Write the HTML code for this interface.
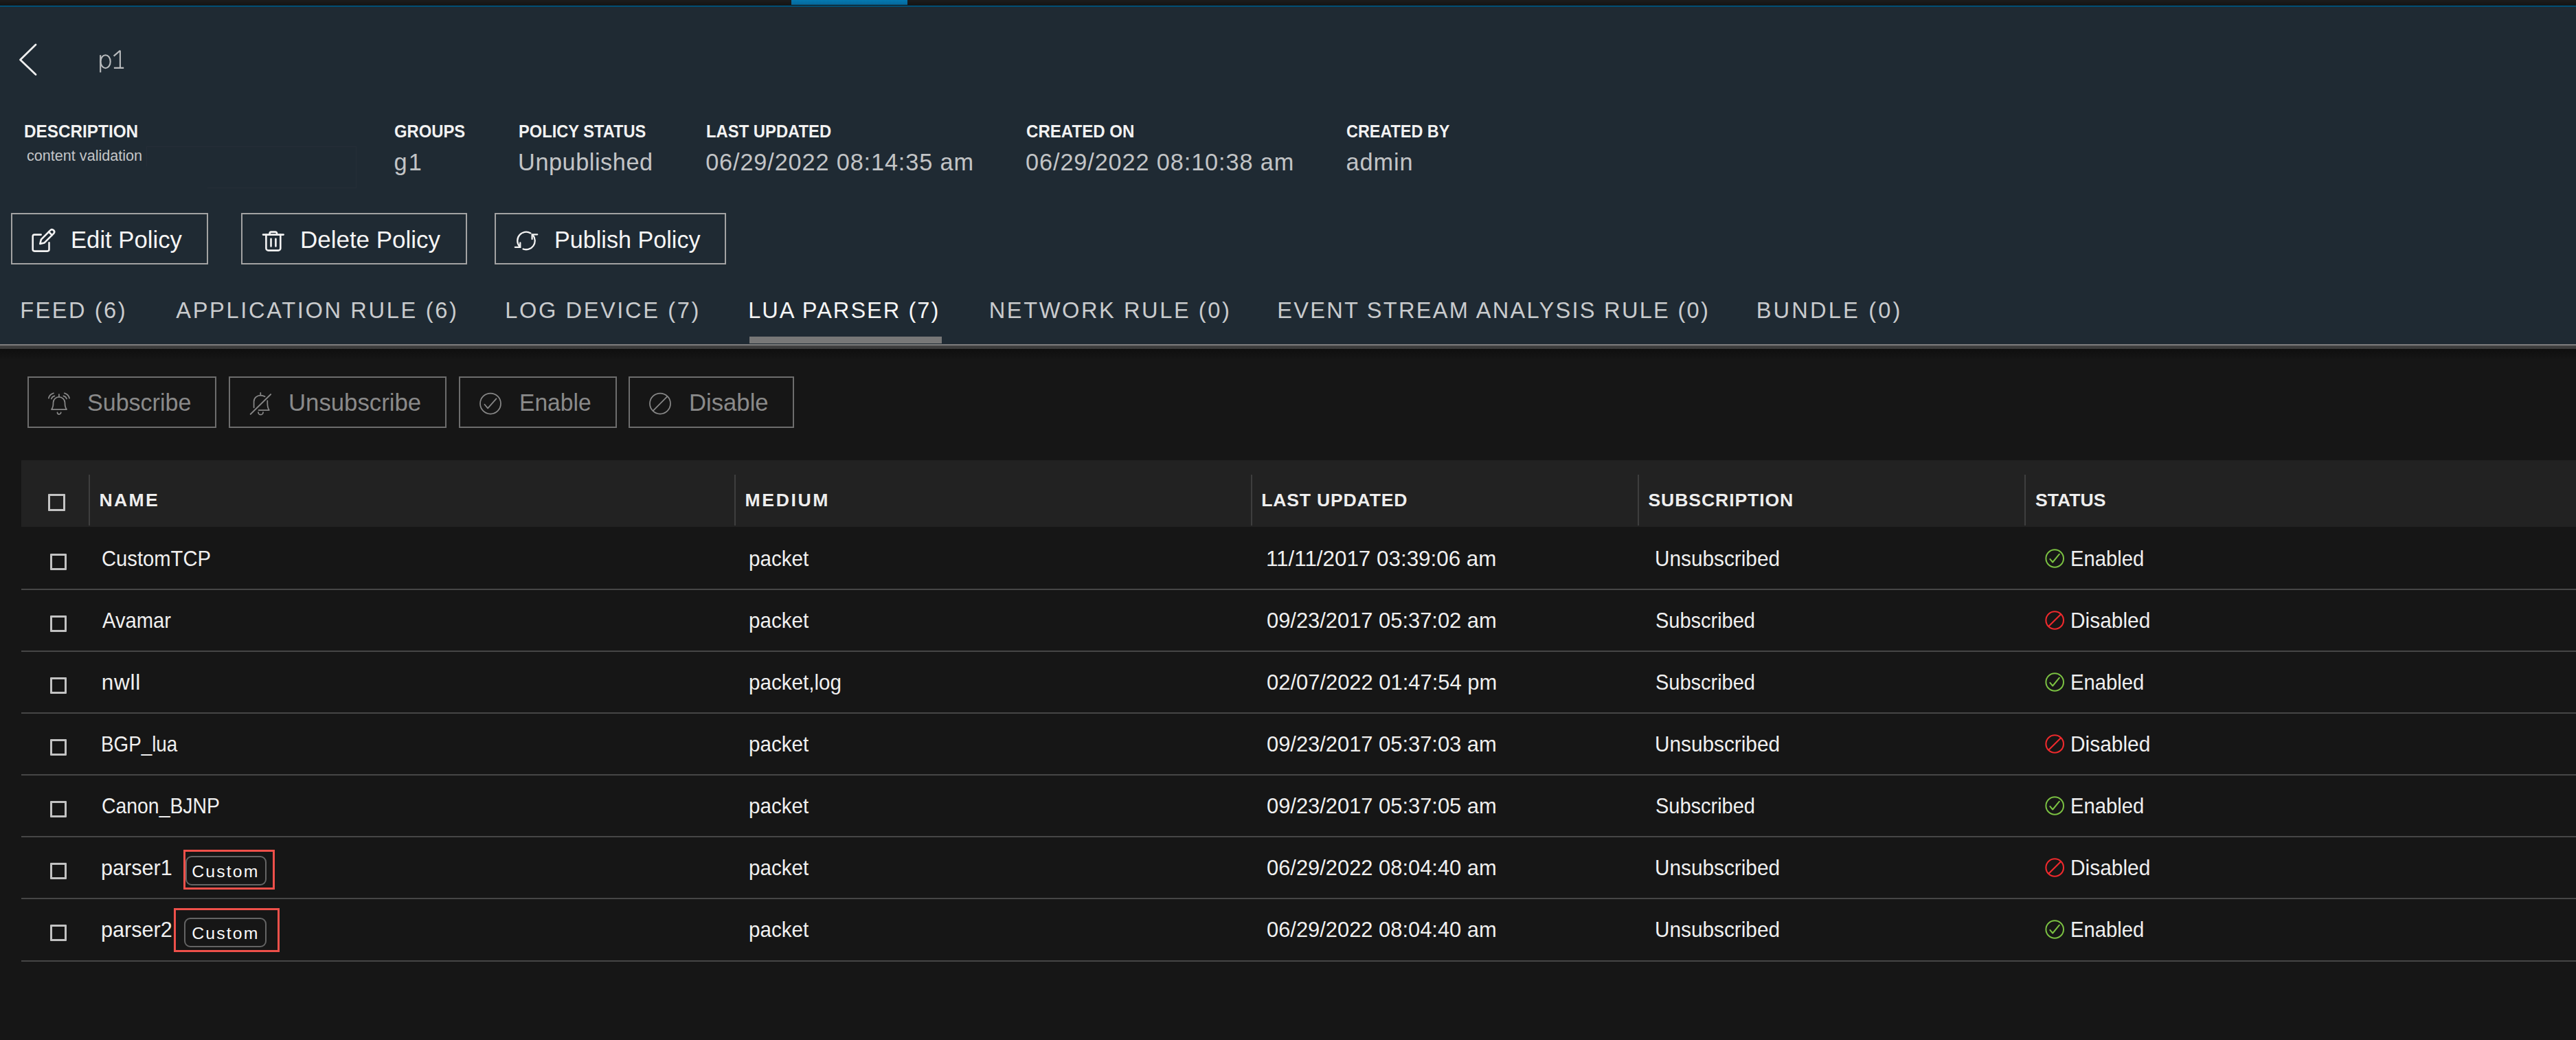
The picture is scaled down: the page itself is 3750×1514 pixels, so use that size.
<!DOCTYPE html>
<html><head><meta charset="utf-8"><title>p1</title>
<style>
html,body{margin:0;padding:0;}
body{width:3750px;height:1514px;overflow:hidden;background:#161616;position:relative;font-family:"Liberation Sans",sans-serif;}
.b{position:absolute;}
.t{position:absolute;line-height:0;white-space:nowrap;transform-origin:0 0;}
.ic{position:absolute;overflow:visible;}
</style></head><body>
<div class="b" style="left:0px;top:0px;width:3750px;height:8px;background:linear-gradient(#1c1c1c,#141414)"></div>
<div class="b" style="left:1152px;top:0px;width:169px;height:7px;background:linear-gradient(#0479b1,#06679a)"></div>
<div class="b" style="left:0px;top:8px;width:3750px;height:2px;background:#014f75"></div>
<div class="b" style="left:0px;top:10px;width:3750px;height:491px;background:#1f2a33"></div>
<div class="b" style="left:213px;top:213px;width:306px;height:1px;background:#252d37"></div>
<div class="b" style="left:518px;top:213px;width:1px;height:61px;background:#252d37"></div>
<div class="b" style="left:213px;top:213px;width:1px;height:29px;background:#252d37"></div>
<div class="b" style="left:302px;top:273px;width:217px;height:1px;background:#252d37"></div>
<div class="b" style="left:0px;top:501px;width:3750px;height:2px;background:#7d7d7d"></div>
<div class="b" style="left:0px;top:503px;width:3750px;height:5px;background:linear-gradient(#424242,#383838)"></div>
<div class="b" style="left:0px;top:508px;width:3750px;height:16px;background:linear-gradient(#0f0f0f,#161616)"></div>
<div class="b" style="left:1091px;top:490px;width:280px;height:10px;background:#777777"></div>
<div class="b" style="left:16px;top:310px;width:287px;height:75px;border:2.5px solid #a3a3a3;box-sizing:border-box"></div>
<div class="b" style="left:351px;top:310px;width:329px;height:75px;border:2.5px solid #a3a3a3;box-sizing:border-box"></div>
<div class="b" style="left:720px;top:310px;width:337px;height:75px;border:2.5px solid #a3a3a3;box-sizing:border-box"></div>
<div class="b" style="left:40px;top:548px;width:275px;height:75px;border:2px solid #6d6d6d;box-sizing:border-box"></div>
<div class="b" style="left:333px;top:548px;width:317px;height:75px;border:2px solid #6d6d6d;box-sizing:border-box"></div>
<div class="b" style="left:668px;top:548px;width:230px;height:75px;border:2px solid #6d6d6d;box-sizing:border-box"></div>
<div class="b" style="left:915px;top:548px;width:241px;height:75px;border:2px solid #6d6d6d;box-sizing:border-box"></div>
<div class="b" style="left:31px;top:670px;width:3719px;height:97px;background:#222222"></div>
<div class="b" style="left:129px;top:691px;width:2px;height:74px;background:#3e3e3e"></div>
<div class="b" style="left:1069px;top:691px;width:2px;height:74px;background:#3e3e3e"></div>
<div class="b" style="left:1821px;top:691px;width:2px;height:74px;background:#3e3e3e"></div>
<div class="b" style="left:2384px;top:691px;width:2px;height:74px;background:#3e3e3e"></div>
<div class="b" style="left:2947px;top:691px;width:2px;height:74px;background:#3e3e3e"></div>
<div class="b" style="left:70px;top:719px;width:25px;height:25px;border:3px solid #c4c4c4;border-radius:1px;box-sizing:border-box"></div>
<div class="b" style="left:31px;top:857px;width:3719px;height:2px;background:#464646"></div>
<div class="b" style="left:73px;top:806px;width:24px;height:24px;border:3px solid #c2c2c2;border-radius:1px;box-sizing:border-box"></div>
<div class="b" style="left:31px;top:947px;width:3719px;height:2px;background:#464646"></div>
<div class="b" style="left:73px;top:896px;width:24px;height:24px;border:3px solid #c2c2c2;border-radius:1px;box-sizing:border-box"></div>
<div class="b" style="left:31px;top:1037px;width:3719px;height:2px;background:#464646"></div>
<div class="b" style="left:73px;top:986px;width:24px;height:24px;border:3px solid #c2c2c2;border-radius:1px;box-sizing:border-box"></div>
<div class="b" style="left:31px;top:1127px;width:3719px;height:2px;background:#464646"></div>
<div class="b" style="left:73px;top:1076px;width:24px;height:24px;border:3px solid #c2c2c2;border-radius:1px;box-sizing:border-box"></div>
<div class="b" style="left:31px;top:1217px;width:3719px;height:2px;background:#464646"></div>
<div class="b" style="left:73px;top:1166px;width:24px;height:24px;border:3px solid #c2c2c2;border-radius:1px;box-sizing:border-box"></div>
<div class="b" style="left:31px;top:1307px;width:3719px;height:2px;background:#464646"></div>
<div class="b" style="left:73px;top:1256px;width:24px;height:24px;border:3px solid #c2c2c2;border-radius:1px;box-sizing:border-box"></div>
<div class="b" style="left:31px;top:1398px;width:3719px;height:2px;background:#464646"></div>
<div class="b" style="left:73px;top:1346px;width:24px;height:24px;border:3px solid #c2c2c2;border-radius:1px;box-sizing:border-box"></div>
<div class="b" style="left:267px;top:1237px;width:133px;height:58px;border:3px solid #ee504a;box-sizing:border-box"></div>
<div class="b" style="left:270px;top:1246px;width:118px;height:43px;border:2px solid #646464;border-radius:9px;box-sizing:border-box"></div>
<div class="b" style="left:253px;top:1322px;width:154px;height:64px;border:3px solid #ee504a;box-sizing:border-box"></div>
<div class="b" style="left:268px;top:1336px;width:120px;height:43px;border:2px solid #646464;border-radius:9px;box-sizing:border-box"></div>
<svg class="ic" style="left:140px;top:68px" width="45" height="42" viewBox="0 0 45 42" ><g fill="none" stroke="#b9bbbd" stroke-width="2.1" stroke-linecap="butt"><path d="M6.2 12.2 V37.4"/><ellipse cx="13.6" cy="21.7" rx="7.1" ry="9.5"/><path d="M34.9 5.6 V31.3 M34.9 5.6 L25.6 13.6 M25.9 30.9 H40.2"/></g></svg>
<svg class="ic" style="left:20px;top:55px" width="45" height="65" viewBox="0 0 45 65" ><path d="M32 10 L9.5 32 L32 53.5" fill="none" stroke="#eeeeee" stroke-width="2.8" stroke-linecap="round" stroke-linejoin="round"/></svg>
<svg class="ic" style="left:40px;top:325px" width="50" height="50" viewBox="0 0 50 50" ><g fill="none" stroke="#f2f2f2" stroke-width="2.6" stroke-linecap="round" stroke-linejoin="round"><path d="M19.7 16.6 H10.2 A2.5 2.5 0 0 0 7.7 19.1 V38.1 A2.5 2.5 0 0 0 10.2 40.6 H29 A2.5 2.5 0 0 0 31.5 38.1 V28.3"/><path d="M18.3 30 L19.9 23.6 L33.4 10.1 A3.4 3.4 0 0 1 38.2 14.9 L24.7 28.4 Z"/><path d="M31 12.5 L35.8 17.3"/></g></svg>
<svg class="ic" style="left:375px;top:325px" width="50" height="50" viewBox="0 0 50 50" ><g fill="none" stroke="#f2f2f2" stroke-width="2.6" stroke-linecap="round" stroke-linejoin="round"><path d="M8 16.6 H37.6"/><path d="M17.6 16.6 V14.8 A2.2 2.2 0 0 1 19.8 12.6 H25.9 A2.2 2.2 0 0 1 28.1 14.8 V16.6"/><path d="M12.4 16.6 V36.4 A3.2 3.2 0 0 0 15.6 39.6 H30.1 A3.2 3.2 0 0 0 33.3 36.4 V16.6"/><path d="M19.5 22.8 V33.5 M26.4 22.8 V33.5"/></g></svg>
<svg class="ic" style="left:740px;top:325px" width="50" height="50" viewBox="0 0 50 50" ><g fill="none" stroke="#f2f2f2" stroke-width="2.3" stroke-linecap="round" stroke-linejoin="miter"><path d="M32.4 14.4 A12.8 12.8 0 0 0 16.2 33.7"/><path d="M9.8 34.8 H17.3 V28.4"/><path d="M21.6 37.5 A12.8 12.8 0 0 0 35.8 17.3"/><path d="M42.2 16.3 H34.6 V23"/></g></svg>
<svg class="ic" style="left:63px;top:563px" width="45" height="45" viewBox="0 0 45 45" ><g fill="none" stroke="#878787" stroke-width="1.75" stroke-linecap="round" stroke-linejoin="round"><path d="M22.9 11 V14.6"/><path d="M12 33 C13.6 31 14.5 28 14.5 24 V23.3 C14.5 18.6 18.2 14.9 22.9 14.9 C27.6 14.9 31.5 18.6 31.5 23.3 V24 C31.5 28 32.4 31 34 33 Z"/><path d="M20.5 37.4 A2.6 2.6 0 0 0 25.7 37.4"/><path d="M15 9.3 A10 10 0 0 0 7.8 16.7"/><path d="M16.4 13.4 A6.5 6.5 0 0 0 11.8 17.5"/><path d="M30.8 9.3 A10 10 0 0 1 38 16.7"/><path d="M29.4 13.4 A6.5 6.5 0 0 1 34 17.5"/></g></svg>
<svg class="ic" style="left:357px;top:563px" width="45" height="45" viewBox="0 0 45 45" ><g fill="none" stroke="#878787" stroke-width="1.75" stroke-linecap="round" stroke-linejoin="round"><path d="M22.3 8.9 V12.4"/><path d="M12.6 30.3 V21.5 C12.6 16.5 17 12.6 22.3 12.6 C25 12.6 27 13.3 28.6 14.3"/><path d="M32.3 20.3 V24 C32.3 28.5 33 31.5 34.8 34 H19.5"/><path d="M19 37.2 A3.5 3.5 0 0 0 26 37.2"/><path d="M7.6 40 L37.2 11"/></g></svg>
<svg class="ic" style="left:690px;top:565px" width="50" height="45" viewBox="0 0 50 45" ><g fill="none" stroke="#878787" stroke-width="1.75" stroke-linecap="round" stroke-linejoin="round"><circle cx="24" cy="22.6" r="15"/><path d="M15.4 23.8 L20.1 29.4 L32.5 15.4"/></g></svg>
<svg class="ic" style="left:937px;top:565px" width="50" height="45" viewBox="0 0 50 45" ><g fill="none" stroke="#878787" stroke-width="1.75" stroke-linecap="round"><circle cx="24" cy="22.6" r="15"/><path d="M13.8 32.8 L34.2 12.4"/></g></svg>
<svg class="ic" style="left:2970px;top:790px" width="45" height="45" viewBox="0 0 45 45" ><g fill="none" stroke="#7bc142" stroke-width="2.0" stroke-linecap="round" stroke-linejoin="round"><circle cx="21.2" cy="23.00" r="12.8"/><path d="M14.3 23.90 L18.2 28.50 L27.9 16.70"/></g></svg>
<svg class="ic" style="left:2970px;top:880px" width="45" height="45" viewBox="0 0 45 45" ><g fill="none" stroke="#ee2a2d" stroke-width="2.1" stroke-linecap="round"><circle cx="21.2" cy="23.00" r="12.8"/><path d="M12.6 31.60 L29.8 14.40"/></g></svg>
<svg class="ic" style="left:2970px;top:970px" width="45" height="45" viewBox="0 0 45 45" ><g fill="none" stroke="#7bc142" stroke-width="2.0" stroke-linecap="round" stroke-linejoin="round"><circle cx="21.2" cy="23.00" r="12.8"/><path d="M14.3 23.90 L18.2 28.50 L27.9 16.70"/></g></svg>
<svg class="ic" style="left:2970px;top:1060px" width="45" height="45" viewBox="0 0 45 45" ><g fill="none" stroke="#ee2a2d" stroke-width="2.1" stroke-linecap="round"><circle cx="21.2" cy="23.00" r="12.8"/><path d="M12.6 31.60 L29.8 14.40"/></g></svg>
<svg class="ic" style="left:2970px;top:1150px" width="45" height="45" viewBox="0 0 45 45" ><g fill="none" stroke="#7bc142" stroke-width="2.0" stroke-linecap="round" stroke-linejoin="round"><circle cx="21.2" cy="23.00" r="12.8"/><path d="M14.3 23.90 L18.2 28.50 L27.9 16.70"/></g></svg>
<svg class="ic" style="left:2970px;top:1240px" width="45" height="45" viewBox="0 0 45 45" ><g fill="none" stroke="#ee2a2d" stroke-width="2.1" stroke-linecap="round"><circle cx="21.2" cy="23.00" r="12.8"/><path d="M12.6 31.60 L29.8 14.40"/></g></svg>
<svg class="ic" style="left:2970px;top:1330px" width="45" height="45" viewBox="0 0 45 45" ><g fill="none" stroke="#7bc142" stroke-width="2.0" stroke-linecap="round" stroke-linejoin="round"><circle cx="21.2" cy="23.00" r="12.8"/><path d="M14.3 23.90 L18.2 28.50 L27.9 16.70"/></g></svg>
<div class="t" style="left:35.30px;top:190.89px;font-size:26px;font-weight:700;color:#f2f2f2;letter-spacing:0.000px;transform:scaleX(0.9347);">DESCRIPTION</div>
<div class="t" style="left:574.42px;top:190.89px;font-size:26px;font-weight:700;color:#f2f2f2;letter-spacing:0.000px;transform:scaleX(0.9163);">GROUPS</div>
<div class="t" style="left:755.30px;top:190.89px;font-size:26px;font-weight:700;color:#f2f2f2;letter-spacing:0.000px;transform:scaleX(0.9101);">POLICY STATUS</div>
<div class="t" style="left:1027.86px;top:190.89px;font-size:26px;font-weight:700;color:#f2f2f2;letter-spacing:0.000px;transform:scaleX(0.9161);">LAST UPDATED</div>
<div class="t" style="left:1493.80px;top:190.89px;font-size:26px;font-weight:700;color:#f2f2f2;letter-spacing:0.000px;transform:scaleX(0.9261);">CREATED ON</div>
<div class="t" style="left:1960.30px;top:190.89px;font-size:26px;font-weight:700;color:#f2f2f2;letter-spacing:0.000px;transform:scaleX(0.9000);">CREATED BY</div>
<div class="t" style="left:39.30px;top:227.37px;font-size:22px;font-weight:400;color:#c4c6c8;letter-spacing:0.000px;transform:scaleX(0.9818);">content validation</div>
<div class="t" style="left:573.60px;top:235.71px;font-size:34.3px;font-weight:400;color:#c2c4c6;letter-spacing:2.201px;">g1</div>
<div class="t" style="left:754.08px;top:235.71px;font-size:34.3px;font-weight:400;color:#c2c4c6;letter-spacing:0.531px;">Unpublished</div>
<div class="t" style="left:1027.16px;top:235.71px;font-size:34.3px;font-weight:400;color:#c2c4c6;letter-spacing:0.856px;">06/29/2022 08:14:35 am</div>
<div class="t" style="left:1493.10px;top:235.71px;font-size:34.3px;font-weight:400;color:#c2c4c6;letter-spacing:0.871px;">06/29/2022 08:10:38 am</div>
<div class="t" style="left:1959.60px;top:235.71px;font-size:34.3px;font-weight:400;color:#c2c4c6;letter-spacing:0.920px;">admin</div>
<div class="t" style="left:102.88px;top:349.00px;font-size:35.2px;font-weight:400;color:#f5f5f5;letter-spacing:0.000px;transform:scaleX(0.9852);">Edit Policy</div>
<div class="t" style="left:437.38px;top:349.00px;font-size:35.2px;font-weight:400;color:#f5f5f5;letter-spacing:0.000px;transform:scaleX(0.9935);">Delete Policy</div>
<div class="t" style="left:807.20px;top:349.00px;font-size:35.2px;font-weight:400;color:#f5f5f5;letter-spacing:0.000px;transform:scaleX(0.9703);">Publish Policy</div>
<div class="t" style="left:29.20px;top:452.20px;font-size:32.6px;font-weight:400;color:#c9cbcd;letter-spacing:2.514px;">FEED (6)</div>
<div class="t" style="left:256.24px;top:452.20px;font-size:32.6px;font-weight:400;color:#c9cbcd;letter-spacing:2.671px;">APPLICATION RULE (6)</div>
<div class="t" style="left:735.20px;top:452.20px;font-size:32.6px;font-weight:400;color:#c9cbcd;letter-spacing:2.618px;">LOG DEVICE (7)</div>
<div class="t" style="left:1089.20px;top:452.20px;font-size:32.6px;font-weight:400;color:#f5f5f5;letter-spacing:2.001px;">LUA PARSER (7)</div>
<div class="t" style="left:1439.76px;top:452.20px;font-size:32.6px;font-weight:400;color:#c9cbcd;letter-spacing:2.584px;">NETWORK RULE (0)</div>
<div class="t" style="left:1859.20px;top:452.20px;font-size:32.6px;font-weight:400;color:#c9cbcd;letter-spacing:2.266px;">EVENT STREAM ANALYSIS RULE (0)</div>
<div class="t" style="left:2556.70px;top:452.20px;font-size:32.6px;font-weight:400;color:#c9cbcd;letter-spacing:3.192px;">BUNDLE (0)</div>
<div class="t" style="left:126.90px;top:586.46px;font-size:35.6px;font-weight:400;color:#8a8a8a;letter-spacing:0.000px;transform:scaleX(0.9569);">Subscribe</div>
<div class="t" style="left:420.20px;top:586.46px;font-size:35.6px;font-weight:400;color:#8a8a8a;letter-spacing:0.000px;transform:scaleX(0.9765);">Unsubscribe</div>
<div class="t" style="left:755.70px;top:586.46px;font-size:35.6px;font-weight:400;color:#8a8a8a;letter-spacing:0.000px;transform:scaleX(0.9441);">Enable</div>
<div class="t" style="left:1002.70px;top:586.46px;font-size:35.6px;font-weight:400;color:#8a8a8a;letter-spacing:0.000px;transform:scaleX(0.9745);">Disable</div>
<div class="t" style="left:144.60px;top:727.88px;font-size:26.6px;font-weight:700;color:#eeeeee;letter-spacing:2.254px;">NAME</div>
<div class="t" style="left:1084.60px;top:727.88px;font-size:26.6px;font-weight:700;color:#eeeeee;letter-spacing:2.587px;">MEDIUM</div>
<div class="t" style="left:1836.16px;top:727.88px;font-size:26.6px;font-weight:700;color:#eeeeee;letter-spacing:0.812px;">LAST UPDATED</div>
<div class="t" style="left:2399.48px;top:727.88px;font-size:26.6px;font-weight:700;color:#eeeeee;letter-spacing:0.899px;">SUBSCRIPTION</div>
<div class="t" style="left:2963.30px;top:727.88px;font-size:26.6px;font-weight:700;color:#eeeeee;letter-spacing:0.000px;transform:scaleX(0.9993);">STATUS</div>
<div class="t" style="left:148.36px;top:813.24px;font-size:31.6px;font-weight:400;color:#f0f0f0;letter-spacing:0.000px;transform:scaleX(0.9243);">CustomTCP</div>
<div class="t" style="left:1089.84px;top:813.24px;font-size:31.6px;font-weight:400;color:#f0f0f0;letter-spacing:0.000px;transform:scaleX(0.9358);">packet</div>
<div class="t" style="left:1843.34px;top:813.24px;font-size:31.6px;font-weight:400;color:#f0f0f0;letter-spacing:0.000px;transform:scaleX(0.9927);">11/11/2017 03:39:06 am</div>
<div class="t" style="left:2408.84px;top:813.24px;font-size:31.6px;font-weight:400;color:#f0f0f0;letter-spacing:0.000px;transform:scaleX(0.9422);">Unsubscribed</div>
<div class="t" style="left:3013.78px;top:813.24px;font-size:31.6px;font-weight:400;color:#f0f0f0;letter-spacing:0.000px;transform:scaleX(0.9254);">Enabled</div>
<div class="t" style="left:149.06px;top:903.24px;font-size:31.6px;font-weight:400;color:#f0f0f0;letter-spacing:0.000px;transform:scaleX(0.9233);">Avamar</div>
<div class="t" style="left:1089.84px;top:903.24px;font-size:31.6px;font-weight:400;color:#f0f0f0;letter-spacing:0.000px;transform:scaleX(0.9358);">packet</div>
<div class="t" style="left:1844.04px;top:903.24px;font-size:31.6px;font-weight:400;color:#f0f0f0;letter-spacing:0.000px;transform:scaleX(0.9772);">09/23/2017 05:37:02 am</div>
<div class="t" style="left:2409.54px;top:903.24px;font-size:31.6px;font-weight:400;color:#f0f0f0;letter-spacing:0.000px;transform:scaleX(0.9168);">Subscribed</div>
<div class="t" style="left:3013.78px;top:903.24px;font-size:31.6px;font-weight:400;color:#f0f0f0;letter-spacing:0.000px;transform:scaleX(0.9457);">Disabled</div>
<div class="t" style="left:147.66px;top:993.24px;font-size:31.6px;font-weight:400;color:#f0f0f0;letter-spacing:0.690px;">nwll</div>
<div class="t" style="left:1089.84px;top:993.24px;font-size:31.6px;font-weight:400;color:#f0f0f0;letter-spacing:0.000px;transform:scaleX(0.9369);">packet,log</div>
<div class="t" style="left:1844.04px;top:993.24px;font-size:31.6px;font-weight:400;color:#f0f0f0;letter-spacing:0.000px;transform:scaleX(0.9788);">02/07/2022 01:47:54 pm</div>
<div class="t" style="left:2409.54px;top:993.24px;font-size:31.6px;font-weight:400;color:#f0f0f0;letter-spacing:0.000px;transform:scaleX(0.9168);">Subscribed</div>
<div class="t" style="left:3013.78px;top:993.24px;font-size:31.6px;font-weight:400;color:#f0f0f0;letter-spacing:0.000px;transform:scaleX(0.9254);">Enabled</div>
<div class="t" style="left:146.96px;top:1083.24px;font-size:31.6px;font-weight:400;color:#f0f0f0;letter-spacing:0.000px;transform:scaleX(0.8798);">BGP_lua</div>
<div class="t" style="left:1089.84px;top:1083.24px;font-size:31.6px;font-weight:400;color:#f0f0f0;letter-spacing:0.000px;transform:scaleX(0.9358);">packet</div>
<div class="t" style="left:1844.04px;top:1083.24px;font-size:31.6px;font-weight:400;color:#f0f0f0;letter-spacing:0.000px;transform:scaleX(0.9772);">09/23/2017 05:37:03 am</div>
<div class="t" style="left:2408.84px;top:1083.24px;font-size:31.6px;font-weight:400;color:#f0f0f0;letter-spacing:0.000px;transform:scaleX(0.9422);">Unsubscribed</div>
<div class="t" style="left:3013.78px;top:1083.24px;font-size:31.6px;font-weight:400;color:#f0f0f0;letter-spacing:0.000px;transform:scaleX(0.9457);">Disabled</div>
<div class="t" style="left:148.36px;top:1173.24px;font-size:31.6px;font-weight:400;color:#f0f0f0;letter-spacing:0.000px;transform:scaleX(0.8984);">Canon_BJNP</div>
<div class="t" style="left:1089.84px;top:1173.24px;font-size:31.6px;font-weight:400;color:#f0f0f0;letter-spacing:0.000px;transform:scaleX(0.9358);">packet</div>
<div class="t" style="left:1844.04px;top:1173.24px;font-size:31.6px;font-weight:400;color:#f0f0f0;letter-spacing:0.000px;transform:scaleX(0.9772);">09/23/2017 05:37:05 am</div>
<div class="t" style="left:2409.54px;top:1173.24px;font-size:31.6px;font-weight:400;color:#f0f0f0;letter-spacing:0.000px;transform:scaleX(0.9168);">Subscribed</div>
<div class="t" style="left:3013.78px;top:1173.24px;font-size:31.6px;font-weight:400;color:#f0f0f0;letter-spacing:0.000px;transform:scaleX(0.9254);">Enabled</div>
<div class="t" style="left:146.96px;top:1263.24px;font-size:31.6px;font-weight:400;color:#f0f0f0;letter-spacing:0.000px;transform:scaleX(0.9684);">parser1</div>
<div class="t" style="left:1089.84px;top:1263.24px;font-size:31.6px;font-weight:400;color:#f0f0f0;letter-spacing:0.000px;transform:scaleX(0.9358);">packet</div>
<div class="t" style="left:1844.04px;top:1263.24px;font-size:31.6px;font-weight:400;color:#f0f0f0;letter-spacing:0.000px;transform:scaleX(0.9772);">06/29/2022 08:04:40 am</div>
<div class="t" style="left:2408.84px;top:1263.24px;font-size:31.6px;font-weight:400;color:#f0f0f0;letter-spacing:0.000px;transform:scaleX(0.9422);">Unsubscribed</div>
<div class="t" style="left:3013.78px;top:1263.24px;font-size:31.6px;font-weight:400;color:#f0f0f0;letter-spacing:0.000px;transform:scaleX(0.9457);">Disabled</div>
<div class="t" style="left:146.96px;top:1353.24px;font-size:31.6px;font-weight:400;color:#f0f0f0;letter-spacing:0.000px;transform:scaleX(0.9684);">parser2</div>
<div class="t" style="left:1089.84px;top:1353.24px;font-size:31.6px;font-weight:400;color:#f0f0f0;letter-spacing:0.000px;transform:scaleX(0.9358);">packet</div>
<div class="t" style="left:1844.04px;top:1353.24px;font-size:31.6px;font-weight:400;color:#f0f0f0;letter-spacing:0.000px;transform:scaleX(0.9772);">06/29/2022 08:04:40 am</div>
<div class="t" style="left:2408.84px;top:1353.24px;font-size:31.6px;font-weight:400;color:#f0f0f0;letter-spacing:0.000px;transform:scaleX(0.9422);">Unsubscribed</div>
<div class="t" style="left:3013.78px;top:1353.24px;font-size:31.6px;font-weight:400;color:#f0f0f0;letter-spacing:0.000px;transform:scaleX(0.9254);">Enabled</div>
<div class="t" style="left:279.30px;top:1268.80px;font-size:24.8px;font-weight:400;color:#fafafa;letter-spacing:2.133px;">Custom</div>
<div class="t" style="left:279.30px;top:1358.80px;font-size:24.8px;font-weight:400;color:#fafafa;letter-spacing:2.133px;">Custom</div>
</body></html>
